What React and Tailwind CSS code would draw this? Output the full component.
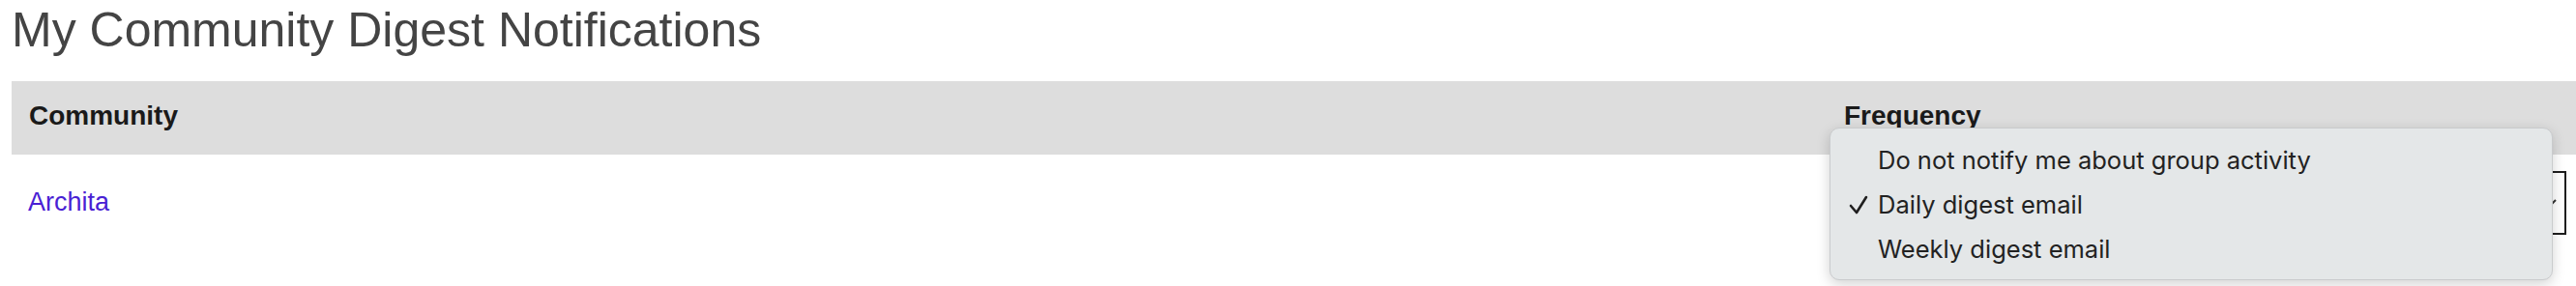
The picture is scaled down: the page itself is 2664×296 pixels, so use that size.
import React from 'react';

const options = [
    { label: 'Do not notify me about group activity', checked: false },
    { label: 'Daily digest email', checked: true },
    { label: 'Weekly digest email', checked: false },
];

function CheckMark() {
    return (
        <svg width="20" height="20" viewBox="0 0 20 20" className="shrink-0">
            <polyline points="2,11 8,18 18,2" fill="none" stroke="#1f1f1f" strokeWidth="2.6" strokeLinecap="round" strokeLinejoin="round" />
        </svg>
    );
}

export default function App() {
    return (
        <div className="relative h-[296px] w-[2664px] overflow-hidden bg-white pl-3">
            <h1 className="pt-[6px] text-[50px] leading-[50px] text-[#444444] font-['Liberation_Sans',Arial,sans-serif]">
                My Community Digest Notifications
            </h1>

            <div className="mt-[28px] font-['Liberation_Sans',Arial,sans-serif]">
                {/* header row */}
                <div className="grid grid-cols-[1877px_1fr] bg-[#dddddd]">
                    <div className="pl-[18px] pt-[22px] pb-[26px] text-[28px] leading-[28px] font-bold text-[#1a1a1a]">
                        Community
                    </div>
                    <div className="pl-[18px] pt-[22px] pb-[26px] text-[28px] leading-[28px] font-bold text-[#1a1a1a]">
                        Frequency
                    </div>
                </div>

                {/* body row */}
                <div className="grid grid-cols-[1877px_1fr] items-center pt-[17px]">
                    <div className="pl-[17px]">
                        <a href="#" className="text-[27px] leading-[28px] text-[#4a1fd4]">Archita</a>
                    </div>
                    <div className="pl-[18px]">
                        <div className="relative flex h-[66px] w-[747px] items-center border-2 border-[#1e1e1e] bg-white">
                            <svg width="16" height="10" viewBox="0 0 16 10" className="absolute right-[8px] top-[27px]">
                                <polyline points="1,1 8,8 15,1" fill="none" stroke="#333" strokeWidth="2" />
                            </svg>
                        </div>
                    </div>
                </div>
            </div>

            {/* native select popup */}
            <div className="absolute left-[1892px] top-[132px] h-[158px] w-[748px] rounded-[10px] border border-[#c9cbcd] bg-[#e4e7e8] pt-[10px] shadow-[0_4px_14px_rgba(0,0,0,0.18)] font-['Inter','Helvetica',sans-serif]">
                {options.map((opt) => (
                    <div key={opt.label} className="flex h-[46px] items-center text-[25.5px] text-[#222222]">
                        <div className="flex w-[49px] justify-end pr-[10px]">
                            {opt.checked && <CheckMark />}
                        </div>
                        <span>{opt.label}</span>
                    </div>
                ))}
            </div>
        </div>
    );
}
